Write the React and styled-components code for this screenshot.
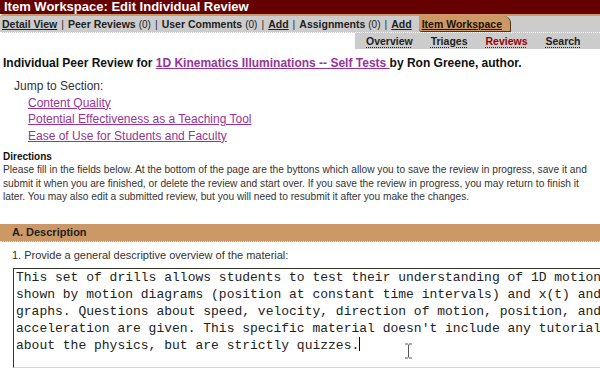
import styled, { createGlobalStyle } from "styled-components"

const GlobalStyle = createGlobalStyle`
  html, body {
    margin: 0;
    padding: 0;
    background: #ffffff;
    overflow: hidden;
  }
  body {
    font-family: "Liberation Sans", Arial, sans-serif;
    color: #333333;
  }
`

const MAROON = "#660000"
const TAN = "#cc9966"
const GREY = "#cccccc"
const PURPLE = "#993399"

const Page = styled.div`
  width: 600px;
  height: 370px;
  position: relative;
  overflow: hidden;
`

const TitleBar = styled.div`
  background: ${MAROON};
  color: #ffffff;
  font-weight: bold;
  font-size: 13px;
  line-height: 14px;
  height: 14px;
  padding-left: 4px;
  white-space: nowrap;
`

const NavBar = styled.div`
  display: flex;
  align-items: stretch;
  height: 16px;
  border-top: 2px solid ${TAN};
  border-top-left-radius: 4px;
  background: ${GREY};
  border-bottom: 1px dotted #ffffff;
  font-size: 10.5px;
  font-weight: bold;
  color: #222222;
  white-space: nowrap;
`

const NavItem = styled.span`
  display: flex;
  align-items: center;
  padding: 0 2px;
  text-decoration: ${(p) => (p.$link ? "underline" : "none")};
  small {
    font-weight: normal;
    font-size: 10px;
    margin-left: 3px;
  }
`

const Sep = styled.span`
  display: flex;
  align-items: center;
  color: #333333;
  font-weight: normal;
  padding: 0 2px;
`

const Tab = styled.span`
  display: flex;
  align-items: center;
  margin-left: 5px;
  padding: 0 8px 0 3px;
  background: ${TAN};
  border-top-right-radius: 7px;
  border-bottom-left-radius: 3px;
  border-right: 1px solid #553311;
  border-bottom: 1px solid #553311;
  text-decoration: underline;
  color: #221100;
`

const SubNavRow = styled.div`
  display: flex;
  justify-content: flex-end;
`

const SubNav = styled.div`
  display: flex;
  width: 245px;
  height: 16px;
  background: ${GREY};
  padding-left: 11px;
  gap: 18px;
  font-size: 10.5px;
  font-weight: bold;
  align-items: center;
  box-sizing: border-box;
`

const SubLink = styled.span`
  color: ${(p) => (p.$active ? "#990000" : "#222222")};
  text-decoration: underline dotted;
  text-underline-offset: 2px;
`

const Heading = styled.div`
  margin-top: 7px;
  padding-left: 3px;
  font-size: 12px;
  line-height: 14px;
  font-weight: bold;
  color: #111111;
  white-space: nowrap;
`

const TitleLink = styled.a`
  color: ${PURPLE};
  text-decoration: underline;
`

const Jump = styled.div`
  margin-top: 8px;
  padding-left: 14px;
  font-size: 12px;
  line-height: 16.5px;
  color: #333333;
`

const JumpList = styled.ul`
  list-style: none;
  margin: 0;
  padding: 0 0 0 14px;
`

const JumpLink = styled.a`
  color: ${PURPLE};
  text-decoration: underline;
`

const DirTitle = styled.div`
  margin-top: 6px;
  padding-left: 3px;
  font-size: 10px;
  font-weight: bold;
  line-height: 13px;
  color: #111111;
`

const DirText = styled.p`
  margin: 0;
  padding-left: 3px;
  font-size: 10.2px;
  line-height: 13.5px;
  color: #333333;
  white-space: nowrap;
`

const SectionBar = styled.div`
  margin-top: 20px;
  height: 17px;
  background: ${TAN};
  border-bottom: 1px dotted #eeddbb;
  display: flex;
  align-items: center;
  padding-left: 12px;
  font-size: 11px;
  font-weight: bold;
  color: #222222;
`

const Question = styled.div`
  margin-top: 6px;
  padding-left: 12px;
  font-size: 11px;
  line-height: 14px;
  color: #333333;
`

const Editor = styled.div`
  margin: 6px 0 0 13px;
  width: 640px;
  height: 100px;
  box-sizing: border-box;
  border-style: solid;
  border-width: 1px;
  border-color: #333322 #ddd8bb #ddd8bb #333322;
  padding: 0 2px;
  font-family: "Liberation Mono", "Courier New", monospace;
  font-size: 13px;
  line-height: 17px;
  color: #222222;
  white-space: pre;
`

const Caret = styled.span`
  display: inline-block;
  width: 1px;
  height: 14px;
  background: #000000;
  vertical-align: -2px;
`

const Pointer = styled.svg`
  position: absolute;
  left: 404px;
  top: 343px;
`

const lines = [
  "This set of drills allows students to test their understanding of 1D motion",
  "shown by motion diagrams (position at constant time intervals) and x(t) and",
  "graphs. Questions about speed, velocity, direction of motion, position, and",
  "acceleration are given. This specific material doesn't include any tutorial",
]

export default function App() {
  return (
    <Page>
      <GlobalStyle />
      <TitleBar>Item Workspace: Edit Individual Review</TitleBar>
      <NavBar>
        <NavItem $link>Detail View</NavItem>
        <Sep>|</Sep>
        <NavItem>
          Peer Reviews<small>(0)</small>
        </NavItem>
        <Sep>|</Sep>
        <NavItem>
          User Comments<small>(0)</small>
        </NavItem>
        <Sep>|</Sep>
        <NavItem $link>Add</NavItem>
        <Sep>|</Sep>
        <NavItem>
          Assignments<small>(0)</small>
        </NavItem>
        <Sep>|</Sep>
        <NavItem $link>Add</NavItem>
        <Tab>Item Workspace</Tab>
      </NavBar>
      <SubNavRow>
        <SubNav>
          <SubLink>Overview</SubLink>
          <SubLink>Triages</SubLink>
          <SubLink $active>Reviews</SubLink>
          <SubLink>Search</SubLink>
        </SubNav>
      </SubNavRow>
      <Heading>
        Individual Peer Review for{" "}
        <TitleLink href="#">1D Kinematics Illuminations -- Self Tests </TitleLink> by Ron
        Greene, author.
      </Heading>
      <Jump>
        Jump to Section:
        <JumpList>
          <li>
            <JumpLink href="#">Content Quality</JumpLink>
          </li>
          <li>
            <JumpLink href="#">Potential Effectiveness as a Teaching Tool</JumpLink>
          </li>
          <li>
            <JumpLink href="#">Ease of Use for Students and Faculty</JumpLink>
          </li>
        </JumpList>
      </Jump>
      <DirTitle>Directions</DirTitle>
      <DirText>
        Please fill in the fields below. At the bottom of the page are the byttons which allow
        you to save the review in progress, save it and
        <br />
        submit it when you are finished, or delete the review and start over. If you save the
        review in progress, you may return to finish it
        <br />
        later. You may also edit a submitted review, but you will need to resubmit it after you
        make the changes.
      </DirText>
      <SectionBar>A. Description</SectionBar>
      <Question>1. Provide a general descriptive overview of the material:</Question>
      <Editor>
        {lines.join("\n")}
        {"\n"}about the physics, but are strictly quizzes.
        <Caret />
      </Editor>
      <Pointer width="9" height="16" viewBox="0 0 9 16">
        <path d="M1 1h3M5 1h3M4.5 1.5v13M1 15h3M5 15h3" stroke="#555" strokeWidth="1" fill="none" />
      </Pointer>
    </Page>
  )
}
